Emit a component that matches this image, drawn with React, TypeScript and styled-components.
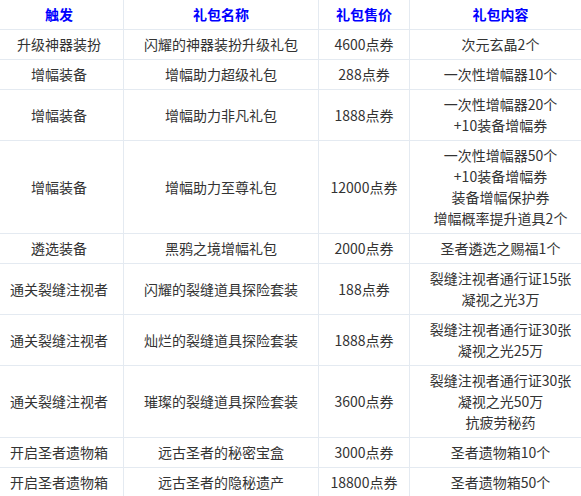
import React from 'react'
import styled, { createGlobalStyle } from 'styled-components'

interface GiftRow {
  trigger: string
  name: string
  price: string
  contents: string[]
}

const rows: GiftRow[] = [
  { trigger: '升级神器装扮', name: '闪耀的神器装扮升级礼包', price: '4600点券', contents: ['次元玄晶2个'] },
  { trigger: '增幅装备', name: '增幅助力超级礼包', price: '288点券', contents: ['一次性增幅器10个'] },
  { trigger: '增幅装备', name: '增幅助力非凡礼包', price: '1888点券', contents: ['一次性增幅器20个', '+10装备增幅券'] },
  {
    trigger: '增幅装备',
    name: '增幅助力至尊礼包',
    price: '12000点券',
    contents: ['一次性增幅器50个', '+10装备增幅券', '装备增幅保护券', '增幅概率提升道具2个'],
  },
  { trigger: '遴选装备', name: '黑鸦之境增幅礼包', price: '2000点券', contents: ['圣者遴选之赐福1个'] },
  { trigger: '通关裂缝注视者', name: '闪耀的裂缝道具探险套装', price: '188点券', contents: ['裂缝注视者通行证15张', '凝视之光3万'] },
  { trigger: '通关裂缝注视者', name: '灿烂的裂缝道具探险套装', price: '1888点券', contents: ['裂缝注视者通行证30张', '凝视之光25万'] },
  {
    trigger: '通关裂缝注视者',
    name: '璀璨的裂缝道具探险套装',
    price: '3600点券',
    contents: ['裂缝注视者通行证30张', '凝视之光50万', '抗疲劳秘药'],
  },
  { trigger: '开启圣者遗物箱', name: '远古圣者的秘密宝盒', price: '3000点券', contents: ['圣者遗物箱10个'] },
  { trigger: '开启圣者遗物箱', name: '远古圣者的隐秘遗产', price: '18800点券', contents: ['圣者遗物箱50个'] },
]

const GlobalStyle = createGlobalStyle`
  html, body {
    margin: 0;
    padding: 0;
    background: #ffffff;
    overflow: hidden;
  }
`

const Table = styled.table`
  border-collapse: collapse;
  table-layout: fixed;
  width: 597px;
  margin: -1px 0 0 -6px;
  font-family: "Noto Sans CJK SC", "Noto Sans", sans-serif;
  font-size: 14px;
  line-height: 21px;
  color: #333333;
  background: #ffffff;
`

const HeadCell = styled.th`
  border: 1px solid #e4eaf1;
  padding: 4px 2px;
  text-align: center;
  vertical-align: middle;
  font-weight: bold;
  color: #0000ff;
`

const Cell = styled.td`
  border: 1px solid #e4eaf1;
  padding: 4px 2px;
  text-align: center;
  vertical-align: middle;
  white-space: nowrap;
`

const Line = styled.div`
  display: block;
`

const App: React.FC = () => {
  return (
    <>
      <GlobalStyle />
      <Table>
        <colgroup>
          <col style={{ width: 129 }} />
          <col style={{ width: 195 }} />
          <col style={{ width: 91 }} />
          <col style={{ width: 182 }} />
        </colgroup>
        <thead>
          <tr>
            <HeadCell>触发</HeadCell>
            <HeadCell>礼包名称</HeadCell>
            <HeadCell>礼包售价</HeadCell>
            <HeadCell>礼包内容</HeadCell>
          </tr>
        </thead>
        <tbody>
          {rows.map((row, i) => (
            <tr key={i}>
              <Cell>{row.trigger}</Cell>
              <Cell>{row.name}</Cell>
              <Cell>{row.price}</Cell>
              <Cell>
                {row.contents.map((c) => (
                  <Line key={c}>{c}</Line>
                ))}
              </Cell>
            </tr>
          ))}
        </tbody>
      </Table>
    </>
  )
}

export default App
